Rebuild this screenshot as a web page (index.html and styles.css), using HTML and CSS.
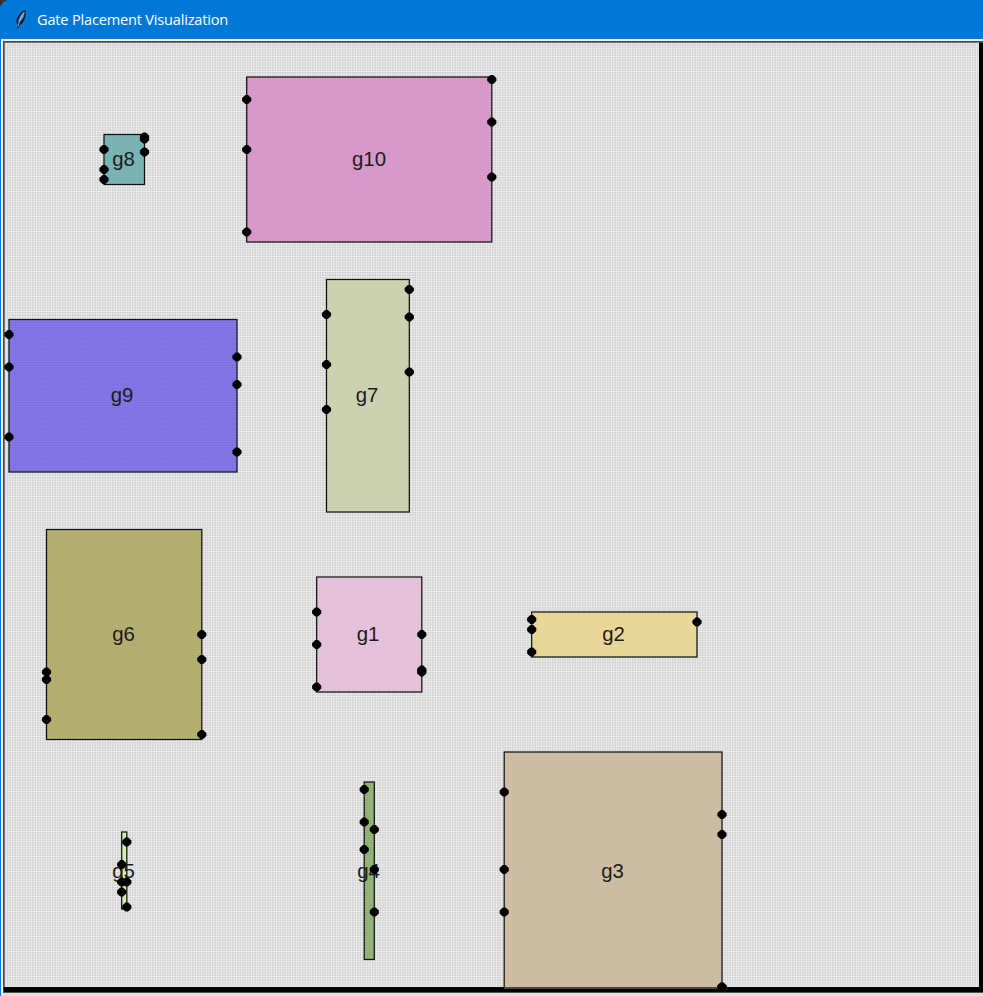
FILE: index.html
```html
<!DOCTYPE html>
<html lang="en">
<head>
<meta charset="utf-8">
<title>Gate Placement Visualization</title>
<link rel="stylesheet" href="styles.css">
</head>
<body>
<div class="window">
<header class="titlebar">
<svg class="feather" width="14" height="22" viewBox="0 0 14 22"><path d="M11.5 1C7 2 3 7 2.3 13L3.8 16 3.5 20.5 5.4 16.5C10.5 14 12.5 7 11.5 1Z" fill="#10202e"/><path d="M10.5 2.5C7 5 4.6 9 4.2 13.5 8.5 11.5 10.8 7 10.5 2.5Z" fill="#4f91d0"/><path d="M9.8 3.5C7.5 7 5.6 11 4.2 17" fill="none" stroke="#b7cfe2" stroke-width="0.8"/></svg>
<h1 class="title">Gate Placement Visualization</h1>
</header>
<svg class="canvas" width="983" height="957" viewBox="0 39 983 957"></svg>
</div>
<script src="gates.js"></script>
</body>
</html>
```
FILE: styles.css
```css
body {
  margin: 0;
  background: #0078d7;
}
.window {
  width: 983px;
  height: 996px;
  overflow: hidden;
  display: flex;
  flex-direction: column;
  background: linear-gradient(135deg, #342f30 0 5px, transparent 5px), #0078d7;
}
.titlebar {
  height: 39px;
  display: flex;
  align-items: center;
  background: #0078d7;
  border-top-left-radius: 9px;
}
.feather {
  margin-left: 14px;
}
.title {
  margin: 0 0 0 9px;
  color: #fff;
  font: 400 14.6px "Open Sans", "Noto Sans", sans-serif;
  letter-spacing: -0.2px;
  line-height: 39px;
  white-space: nowrap;
}
.canvas {
  display: block;
  flex: none;
}
.gate {
  stroke: #111;
  stroke-width: 1.25;
}
.label {
  font: 20.4px "Liberation Sans", Arial, sans-serif;
  text-anchor: middle;
  fill: #1c1c1c;
}
```
FILE: gates.js
```javascript
const gates = [
  { name: "g8", box: [104, 134.5, 144.5, 184.5], color: "#73afaf", tx: 123.5, ty: 166, left: [149.5, 169.5, 179.5], right: [137, 139, 152] },
  { name: "g10", box: [246.7, 77, 491.8, 242], color: "#d593c8", tx: 369, ty: 166, left: [99.5, 149.5, 232], right: [79.5, 122, 177] },
  { name: "g9", box: [9, 319.5, 237, 472], color: "#7c6de4", tx: 122, ty: 402, left: [334.5, 367, 437], right: [357, 384.5, 452] },
  { name: "g7", box: [326.5, 279.5, 409.3, 512], color: "#c9ceac", tx: 367, ty: 402, left: [314.5, 364.5, 409.5], right: [289.5, 317, 372] },
  { name: "g6", box: [46.5, 529.5, 201.8, 739.5], color: "#b0aa69", tx: 123.5, ty: 641, left: [672, 679.5, 719.5], right: [634.5, 659.5, 734.5] },
  { name: "g1", box: [316.7, 577, 421.8, 692], color: "#e2bed9", tx: 368, ty: 641, left: [612, 644.5, 687], right: [634.5, 670, 672] },
  { name: "g2", box: [531.7, 612, 697, 657], color: "#e8d493", tx: 613.5, ty: 641, left: [619.5, 629.5, 652], right: [622] },
  { name: "g3", box: [504.2, 752, 722, 988.5], color: "#cab99e", tx: 612.5, ty: 877.5, left: [792, 869.5, 912], right: [814.5, 834.5, 987] },
  { name: "g4", box: [364.2, 782, 374.3, 959.5], color: "#8bae71", tx: 368.5, ty: 877.5, left: [789.5, 822, 849.5], right: [829.5, 869.5, 912] },
  { name: "g5", box: [121.7, 832, 126.8, 909], color: "#d0edaa", tx: 123.5, ty: 877.5, left: [864.5, 882, 892], right: [842, 882, 907] }
];

const rect = (x, y, w, h, attrs) => `<rect x="${x}" y="${y}" width="${w}" height="${h}" ${attrs}/>`;
const pin = (x, y) => `<path d="M${x - 1.4} ${y - 4.6}h2.8l3.2 3.2v2.8l-3.2 3.2h-2.8l-3.2 -3.2v-2.8z"/>`;

let out = `<defs><pattern id="grid" width="5" height="5" x="1" y="1" patternUnits="userSpaceOnUse">
<rect width="5" height="5" fill="#d0d0d0"/>
<path d="M0 .5H5M0 3H5M.5 0V5M3 0V5" stroke="#fff" stroke-opacity=".42" stroke-width="1"/>
</pattern>
<pattern id="mesh" width="5" height="5" x="1" y="1" patternUnits="userSpaceOnUse">
<path d="M0 .5H5M0 3H5M.5 0V5M3 0V5" stroke="#fff" stroke-opacity=".06" stroke-width="1"/>
</pattern></defs>`;
out += rect(1, 39, 982, 957, 'fill="#f0f0f0"');
out += rect(3, 41, 980, 951, 'fill="#4c4848"');
out += rect(4.7, 42.7, 974.3, 944.3, 'fill="url(#grid)"');
out += rect(979, 43, 4, 949, 'fill="#000"');
out += rect(4, 987, 979, 5, 'fill="#000"');
out += rect(3, 992, 980, 1, 'fill="#555"');
out += rect(3, 993, 980, 3, 'fill="#e4e0e0"');

for (const g of gates) {
  const [x1, y1, x2, y2] = g.box;
  out += rect(x1, y1, x2 - x1, y2 - y1, `class="gate" fill="${g.color}"`);
  out += rect(x1 + 0.6, y1 + 0.6, x2 - x1 - 1.2, y2 - y1 - 1.2, 'fill="url(#mesh)"');
  out += `<text class="label" x="${g.tx}" y="${g.ty}">${g.name}</text>`;
  for (const y of g.left) out += pin(x1, y);
  for (const y of g.right) out += pin(x2, y);
}
out += rect(504, 987, 218, 2, 'fill="#4d4536"');
out += pin(722, 987);
out += rect(504, 989, 479, 3, 'fill="#000"');
document.querySelector(".canvas").innerHTML = out;
```
